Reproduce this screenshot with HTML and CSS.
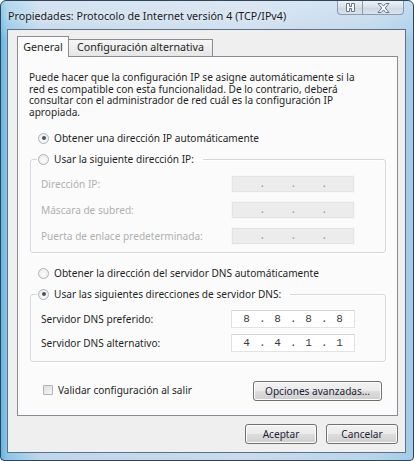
FILE: index.html
```html
<!DOCTYPE html>
<html lang="es">
<head>
<meta charset="utf-8">
<title>Propiedades: Protocolo de Internet versión 4 (TCP/IPv4)</title>
<link rel="stylesheet" href="styles.css">
</head>
<body>
<div class="window">
  <div class="titlebar">
    <span class="title">Propiedades: Protocolo de Internet versión 4 (TCP/IPv4)</span>
    <div class="caption-btns">
      <span class="cbtn help">
        <svg width="9" height="9" viewBox="0 0 9 9"><path d="M0.5 0.5h3v3h2v-3h3v8h-3v-3h-2v3h-3z" fill="#f7f9fb" stroke="#6b7784" stroke-width="1"/></svg>
      </span>
      <span class="cbtn close">
        <svg width="13" height="10" viewBox="0 0 13 10"><path d="M1 0.5h3.2l2.3 2.6 2.3-2.6h3.2l-3.8 4.5 3.8 4.5h-3.2l-2.3-2.6-2.3 2.6h-3.2l3.8-4.5z" fill="#f7f9fb" stroke="#6b7784" stroke-width="1"/></svg>
      </span>
    </div>
  </div>
  <div class="client">
    <div class="tabs">
      <div class="tab active">General</div>
      <div class="tab">Configuración alternativa</div>
    </div>
    <div class="panel">
      <p class="intro">Puede hacer que la configuración IP se asigne automáticamente si la<br>red es compatible con esta funcionalidad. De lo contrario, deberá<br>consultar con el administrador de red cuál es la configuración IP<br>apropiada.</p>

      <label class="opt"><span class="radio checked"></span>Obtener una dirección IP automáticamente</label>

      <fieldset class="group">
        <legend><label class="opt"><span class="radio"></span>Usar la siguiente dirección IP:</label></legend>
        <div class="fields spaced disabled">
          <span class="lbl">Dirección IP:</span>
          <span class="ip"><span class="f"></span><span class="d">.</span><span class="f"></span><span class="d">.</span><span class="f"></span><span class="d">.</span><span class="f"></span></span>
          <span class="lbl">Máscara de subred:</span>
          <span class="ip"><span class="f"></span><span class="d">.</span><span class="f"></span><span class="d">.</span><span class="f"></span><span class="d">.</span><span class="f"></span></span>
          <span class="lbl">Puerta de enlace predeterminada:</span>
          <span class="ip"><span class="f"></span><span class="d">.</span><span class="f"></span><span class="d">.</span><span class="f"></span><span class="d">.</span><span class="f"></span></span>
        </div>
      </fieldset>

      <label class="opt opt-dns"><span class="radio"></span>Obtener la dirección del servidor DNS automáticamente</label>

      <fieldset class="group">
        <legend><label class="opt"><span class="radio checked"></span>Usar las siguientes direcciones de servidor DNS:</label></legend>
        <div class="fields">
          <span class="lbl">Servidor DNS preferido:</span>
          <span class="ip"><span class="f">8</span><span class="d">.</span><span class="f">8</span><span class="d">.</span><span class="f">8</span><span class="d">.</span><span class="f">8</span></span>
          <span class="lbl">Servidor DNS alternativo:</span>
          <span class="ip"><span class="f">4</span><span class="d">.</span><span class="f">4</span><span class="d">.</span><span class="f">1</span><span class="d">.</span><span class="f">1</span></span>
        </div>
      </fieldset>

      <div class="bottom-row">
        <label class="check"><span class="box"></span>Validar configuración al salir</label>
        <span class="btn wide">Opciones avanzadas...</span>
      </div>
    </div>
    <div class="actions">
      <span class="btn">Aceptar</span>
      <span class="btn">Cancelar</span>
    </div>
  </div>
</div>
</body>
</html>
```

FILE: styles.css
```css
html, body {
  margin: 0;
  background: #ffffff;
}

body {
  font-family: "Noto Sans", "Open Sans", sans-serif;
  font-size: 10.1px;
  color: #1f1f1f;
}

.window {
  box-sizing: border-box;
  width: 414px;
  height: 461px;
  border: 1px solid #2f4459;
  border-radius: 6px 6px 4px 4px;
  padding: 0 7px 7px 6px;
  display: flex;
  flex-direction: column;
  background:
    linear-gradient(to bottom, rgba(255, 255, 255, 0.35) 0px, rgba(255, 255, 255, 0.15) 28px, rgba(255, 255, 255, 0) 40px),
    linear-gradient(to right, #62b6df 0px, #8cc6e6 6px, #c0d6ea 40px, #c9dbec 60%, #b9d4ea 90%, #a4cbe8 100%);
}

/* Title bar */
.titlebar {
  height: 28px;
  display: flex;
  justify-content: space-between;
  align-items: flex-start;
  padding-left: 1px;
}

.title {
  align-self: center;
  font-size: 10.7px;
  color: #1b1b1b;
  text-shadow: 0 0 6px rgba(255, 255, 255, 0.9);
  margin-top: 1px;
}

.caption-btns {
  display: flex;
  margin-right: 2px;
}

.cbtn {
  box-sizing: border-box;
  height: 14px;
  display: flex;
  align-items: center;
  justify-content: center;
  border: 1px solid #8b9bab;
  border-top: none;
  background: linear-gradient(to bottom, #eef2f6, #d6e0ea 50%, #cbd7e3 51%, #d9e3ec);
}

.cbtn.help {
  width: 26px;
  border-radius: 0 0 0 4px;
}

.cbtn.close {
  width: 41px;
  border-left: none;
  border-radius: 0 0 4px 0;
}

/* Client area */
.client {
  flex: 1;
  border: 1px solid #5c7086;
  background: #efefef;
  padding: 6px 7px 8px 9px;
  display: flex;
  flex-direction: column;
}

.tabs {
  height: 20px;
  display: flex;
  align-items: flex-end;
  font-size: 10.7px;
}

.tab {
  box-sizing: border-box;
  text-align: center;
  border: 1px solid #898c95;
  border-bottom: none;
  background: linear-gradient(to bottom, #f6f6f6, #e6e6e6);
  height: 17px;
  line-height: 15px;
  width: 144px;
  border-left: none;
}

.tab.active {
  position: relative;
  z-index: 1;
  width: 52px;
  height: 21px;
  line-height: 20px;
  margin-bottom: -1px;
  border-left: 1px solid #898c95;
  background: #fbfbfb;
}

.panel {
  box-sizing: border-box;
  height: 360px;
  border: 1px solid #898c95;
  background: #fbfbfb;
  padding: 15px 11px 13px 11px;
}

.intro {
  margin: 0;
  line-height: 11.5px;
}

/* Radio options */
.opt {
  display: flex;
  align-items: center;
  height: 14px;
  gap: 5px;
  white-space: nowrap;
}

.panel > .opt {
  margin: 13px 0 0 9px;
}

.radio {
  box-sizing: border-box;
  width: 11px;
  height: 11px;
  border-radius: 50%;
  border: 1px solid #aeb3b8;
  background: radial-gradient(circle at 50% 60%, #fbfbfb 0%, #e8e8e8 100%);
  display: flex;
  align-items: center;
  justify-content: center;
}

.radio.checked::after {
  content: "";
  width: 4px;
  height: 4px;
  border-radius: 50%;
  background: #4a5460;
}

/* Group boxes */
.group {
  margin: 7px 0 0 1px;
  border: 1px solid #d3d8dc;
  border-radius: 3px;
  box-shadow: inset 1px 1px 0 #ffffff, 1px 1px 0 #ffffff;
  padding: 9px 30px 7px 10px;
  min-width: 0;
}

.group legend {
  margin-left: -4px;
  padding: 0 9px 0 1px;
}

.group:last-of-type {
  padding-bottom: 9px;
}

.fields {
  display: grid;
  grid-template-columns: 1fr 124px;
  row-gap: 6px;
  align-items: center;
}

.fields.spaced {
  row-gap: 8px;
}

.fields.disabled .lbl {
  color: #b0b0b0;
}

.ip {
  box-sizing: border-box;
  height: 18px;
  display: flex;
  align-items: center;
  padding: 0 2px;
  border: 1px solid #dfe3e7;
  border-top-color: #d2d6db;
  background: #ffffff;
  font-family: "Liberation Mono", monospace;
  font-size: 11px;
  color: #3a3a3a;
}

.ip .f {
  width: 25px;
  text-align: center;
}

.ip .d {
  width: 6px;
  text-align: center;
}

.fields.disabled .ip {
  background: #ececec;
  border-color: #f6f6f6;
  box-shadow: inset 0 0 0 1px #e4e4e4;
  color: #9a9a9a;
}

/* Bottom row in panel */
.bottom-row {
  margin-top: 19px;
  height: 20px;
  display: flex;
  align-items: center;
  justify-content: space-between;
}

.check {
  display: flex;
  align-items: center;
  gap: 5px;
  margin-left: 14px;
  margin-top: -2px;
}

.check .box {
  box-sizing: border-box;
  width: 10px;
  height: 10px;
  border: 1px solid #aeb3b8;
  border-radius: 1px;
  background: linear-gradient(135deg, #dcdcdc, #f8f8f8);
}

/* Buttons */
.btn {
  box-sizing: border-box;
  height: 20px;
  width: 72px;
  display: flex;
  align-items: center;
  justify-content: center;
  border: 1px solid #707070;
  border-radius: 3px;
  box-shadow: inset 0 0 0 1px #fcfcfc;
  background: linear-gradient(to bottom, #f2f2f2 0%, #ebebeb 50%, #dddddd 51%, #cfcfcf 100%);
  color: #1e1e3a;
}

.btn.wide {
  width: 129px;
  margin-right: 4px;
}

.actions {
  margin-top: 8px;
  display: flex;
  justify-content: flex-end;
  gap: 9px;
}
```
